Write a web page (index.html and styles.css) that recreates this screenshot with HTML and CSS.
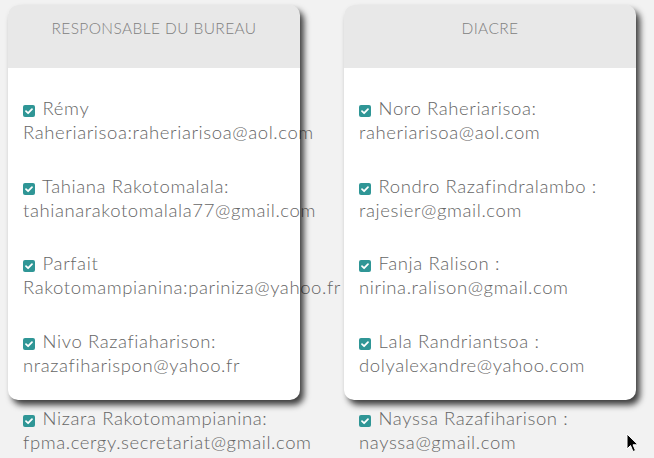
FILE: index.html
```html
<!DOCTYPE html>
<html lang="fr">
<head>
<meta charset="utf-8">
<link rel="stylesheet" href="styles.css">
</head>
<body>
<div class="board">
  <section class="card">
    <header class="card-head">RESPONSABLE DU BUREAU</header>
    <ul class="list">
      <li><span class="check"><svg viewBox="0 0 12 12"><path d="M3 6.2 L5.1 8.2 L9 4.2" /></svg></span> Rémy Raheriarisoa:raheriarisoa@aol.com</li>
      <li><span class="check"><svg viewBox="0 0 12 12"><path d="M3 6.2 L5.1 8.2 L9 4.2" /></svg></span> Tahiana Rakotomalala: tahianarakotomalala77@gmail.com</li>
      <li><span class="check"><svg viewBox="0 0 12 12"><path d="M3 6.2 L5.1 8.2 L9 4.2" /></svg></span> Parfait Rakotomampianina:pariniza@yahoo.fr</li>
      <li><span class="check"><svg viewBox="0 0 12 12"><path d="M3 6.2 L5.1 8.2 L9 4.2" /></svg></span> Nivo Razafiaharison: nrazafiharispon@yahoo.fr</li>
      <li><span class="check"><svg viewBox="0 0 12 12"><path d="M3 6.2 L5.1 8.2 L9 4.2" /></svg></span> Nizara Rakotomampianina: fpma.cergy.secretariat@gmail.com</li>
    </ul>
  </section>
  <section class="card">
    <header class="card-head">DIACRE</header>
    <ul class="list">
      <li><span class="check"><svg viewBox="0 0 12 12"><path d="M3 6.2 L5.1 8.2 L9 4.2" /></svg></span> Noro Raheriarisoa: raheriarisoa@aol.com</li>
      <li><span class="check"><svg viewBox="0 0 12 12"><path d="M3 6.2 L5.1 8.2 L9 4.2" /></svg></span> Rondro Razafindralambo : rajesier@gmail.com</li>
      <li><span class="check"><svg viewBox="0 0 12 12"><path d="M3 6.2 L5.1 8.2 L9 4.2" /></svg></span> Fanja Ralison : nirina.ralison@gmail.com</li>
      <li><span class="check"><svg viewBox="0 0 12 12"><path d="M3 6.2 L5.1 8.2 L9 4.2" /></svg></span> Lala Randriantsoa : dolyalexandre@yahoo.com</li>
      <li><span class="check"><svg viewBox="0 0 12 12"><path d="M3 6.2 L5.1 8.2 L9 4.2" /></svg></span> Nayssa Razafiharison : nayssa@gmail.com</li>
    </ul>
  </section>
</div>
<svg class="cursor" viewBox="0 0 14 22" width="14" height="22"><path d="M1 1 L1 16 L4.5 12.5 L7 18.5 L9.5 17.5 L7 11.8 L12 11.8 Z" fill="#000" stroke="#fff" stroke-width="1"/></svg>
</body>
</html>
```
FILE: styles.css
```css
html, body {
  margin: 0;
  padding: 0;
  height: 100%;
  overflow: hidden;
}
body {
  background: #f2f2f2;
  font-family: Lato, "Open Sans", sans-serif;
  position: relative;
}
.board {
  display: flex;
  gap: 44px;
  padding: 5px 0 0 8px;
  align-items: flex-start;
}
.card {
  position: relative;
  width: 292px;
  height: 395px;
  flex: none;
  background: #fff;
  border-radius: 10px;
}
.card::after {
  content: "";
  position: absolute;
  inset: 0;
  border-radius: 10px;
  box-shadow: 4px 5px 6px rgba(0, 0, 0, 0.75);
  pointer-events: none;
}
.card-head {
  height: 63px;
  box-sizing: border-box;
  background: #e8e8e8;
  border-radius: 10px 10px 0 0;
  padding-top: 14px;
  text-align: center;
  font-size: 15.5px;
  font-weight: 300;
  color: #808080;
  letter-spacing: 0.4px;
  line-height: 18px;
}
.list {
  list-style: none;
  margin: 0;
  padding: 28px 15px 0;
}
.list li {
  font-size: 18.5px;
  font-weight: 300;
  letter-spacing: 0.6px;
  line-height: 24px;
  color: #666;
  margin-bottom: 29.5px;
}
.check {
  display: inline-block;
  width: 12px;
  height: 12px;
  border-radius: 2px;
  background: #2f9696;
  vertical-align: -2px;
  margin-right: 2px;
}
.check svg {
  display: block;
  width: 12px;
  height: 12px;
  fill: none;
  stroke: #fff;
  stroke-width: 1.8;
  stroke-linecap: round;
  stroke-linejoin: round;
}
.cursor {
  position: absolute;
  left: 626px;
  top: 433px;
}
```
